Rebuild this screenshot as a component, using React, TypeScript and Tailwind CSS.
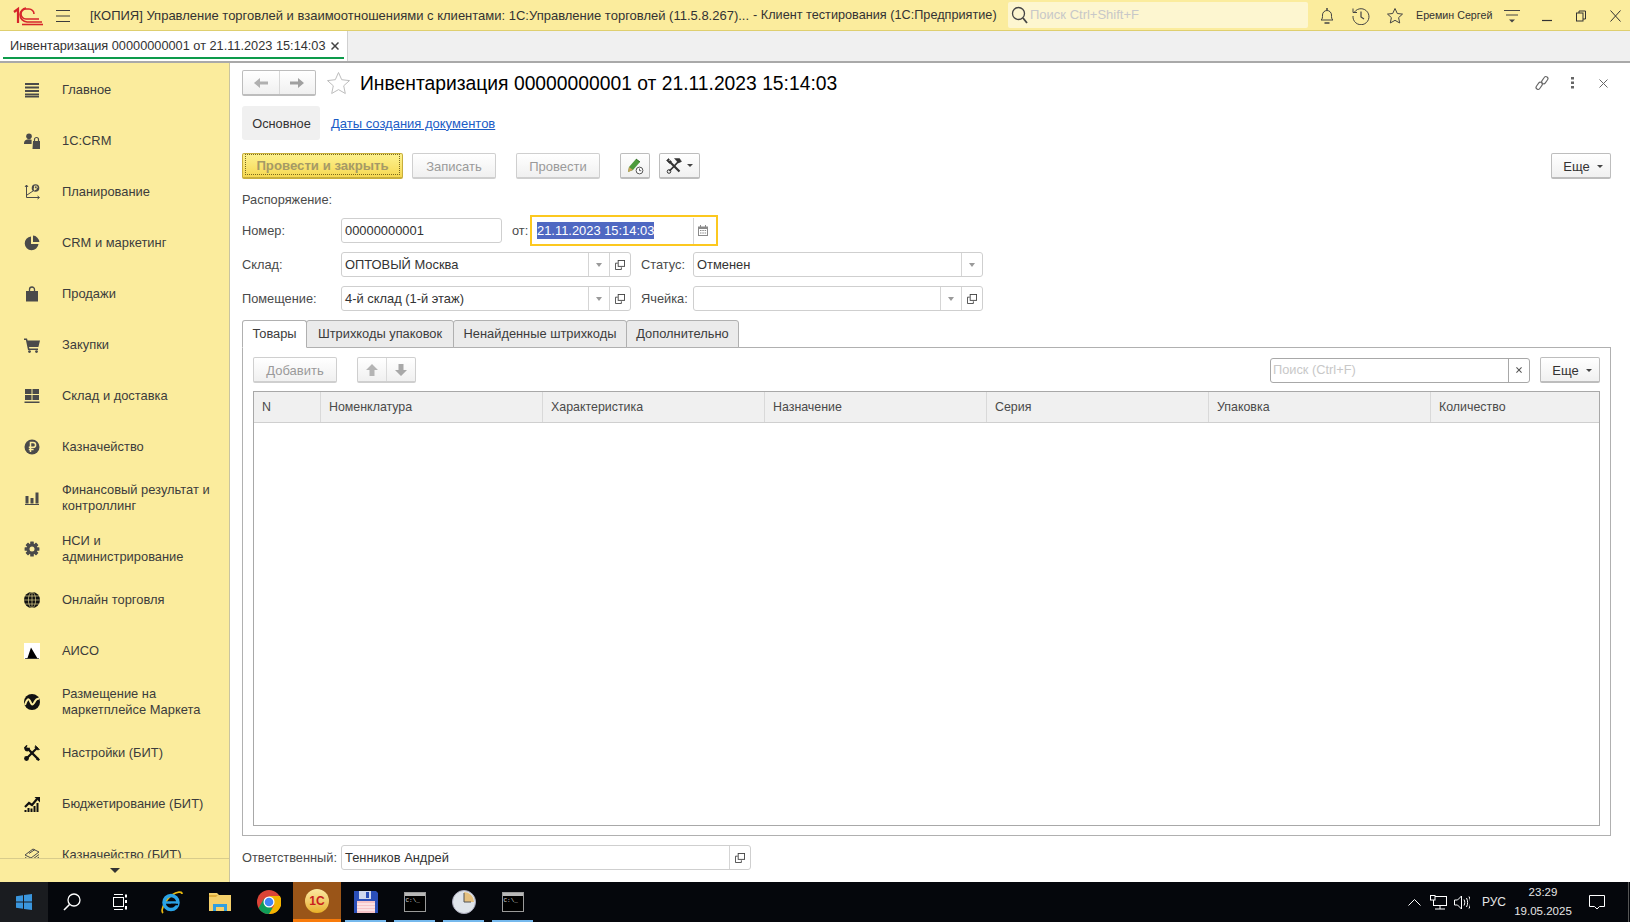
import React from "react";

const G = "#4a4a4a";

function MenuIcon({ name }: { name: string }) {
  const c = "w-4 h-4 shrink-0";
  switch (name) {
    case "main":
      return <svg className={c} viewBox="0 0 16 16" fill={G}><rect x="1" y="1" width="14" height="2" /><rect x="1" y="4.5" width="14" height="2" /><rect x="1" y="8" width="14" height="2" /><rect x="1" y="11.5" width="14" height="2" /><rect x="1" y="14" width="14" height="1.5" /></svg>;
    case "crm":
      return <svg className={c} viewBox="0 0 16 16" fill={G}><circle cx="5" cy="3.2" r="2.8" /><path d="M0 10c0-2.5 2-3.8 5-3.8 1 0 2 .2 2.6.5V11H0z" /><path d="M9 8h7v8H8.5z" /><path d="M10.5 8V6.5a2 2 0 0 1 4 0V8" fill="none" stroke={G} strokeWidth="1.2" /></svg>;
    case "plan":
      return <svg className={c} viewBox="0 0 16 16" fill="none" stroke={G} strokeWidth="1"><path d="M2.5 1v12.5H15" /><path d="M1 3l1.5-2L4 3M13.5 12l2 1.5-2 1.5" /><path d="M3 11l6-4" /><circle cx="11.5" cy="4" r="3.8" fill={G} stroke="none" /><path d="M10.5 6.5V2h1.6a1.2 1.2 0 0 1 0 2.4h-2.4M9.8 5.5h2.6" stroke="#fbec9d" strokeWidth=".9" /></svg>;
    case "pie":
      return <svg className={c} viewBox="0 0 16 16" fill={G}><path d="M7 1.5A6.9 6.9 0 1 0 14.5 9H7z" /><path d="M9 0.6A7 7 0 0 1 15.4 7H9z" /></svg>;
    case "bag":
      return <svg className={c} viewBox="0 0 16 16" fill={G}><path d="M2 5h12v10.5H2z" /><path d="M5.5 7V3.5a2.5 2.5 0 0 1 5 0V7" fill="none" stroke={G} strokeWidth="1.3" /></svg>;
    case "cart":
      return <svg className={c} viewBox="0 0 16 16" fill={G}><path d="M0 1.5h3l.6 2H16l-1.6 6.5H5l.4 1.5H14V13H4L1.9 3H0z" /><circle cx="5.5" cy="14.6" r="1.4" /><circle cx="12.5" cy="14.6" r="1.4" /></svg>;
    case "grid":
      return <svg className={c} viewBox="0 0 16 16" fill={G}><rect x="1" y="1" width="6.5" height="5" /><rect x="8.5" y="1" width="6.5" height="5" /><rect x="1" y="7" width="6.5" height="5" /><rect x="8.5" y="7" width="6.5" height="5" /><rect x="0.5" y="13.5" width="15" height="1.5" /></svg>;
    case "rub":
      return <svg className={c} viewBox="0 0 16 16"><circle cx="8" cy="8" r="7.5" fill={G} /><path d="M6.5 13V3.5h2.7a2.4 2.4 0 0 1 0 4.8H4.8M4.8 10.5h4.8" fill="none" stroke="#fbec9d" strokeWidth="1.5" /></svg>;
    case "bars":
      return <svg className={c} viewBox="0 0 16 16" fill={G}><rect x="1.5" y="6" width="3" height="7.5" /><rect x="6.5" y="8" width="3" height="5.5" /><rect x="11.5" y="2.5" width="3" height="11" /><rect x="1" y="14" width="14" height="1" /></svg>;
    case "gear":
      return <svg className={c} viewBox="0 0 16 16"><g fill={G}><circle cx="8" cy="8" r="5.4" /><g><rect x="6.2" y="0.6" width="3.6" height="14.8" rx=".5" /><rect x="6.2" y="0.6" width="3.6" height="14.8" rx=".5" transform="rotate(45 8 8)" /><rect x="6.2" y="0.6" width="3.6" height="14.8" rx=".5" transform="rotate(90 8 8)" /><rect x="6.2" y="0.6" width="3.6" height="14.8" rx=".5" transform="rotate(135 8 8)" /></g></g><circle cx="8" cy="8" r="2.5" fill="#fbec9d" /></svg>;
    case "globe":
      return <svg className={c} viewBox="0 0 16 16"><circle cx="8" cy="8" r="8" fill="#111" /><g fill="none" stroke="#fbec9d" strokeWidth=".6"><ellipse cx="8" cy="8" rx="3.6" ry="8" /><path d="M8 0v16M0 8h16M1.2 4h13.6M1.2 12h13.6" /></g></svg>;
    case "aiso":
      return <svg className={c} viewBox="0 0 16 16"><rect width="16" height="16" fill="#fff" /><path d="M7 4.500L13.500 15.500H1.500L3.500 15z" fill="#000" /><path d="M1 15.500h14" stroke="#000" strokeWidth=".6" /></svg>;
    case "market":
      return <svg className={c} viewBox="0 0 16 16"><circle cx="8" cy="8" r="8" fill="#111" /><path d="M1 11c2-6 3.5-7 5-4s2 5 4 2 2-5 5-4" fill="none" stroke="#fbec9d" strokeWidth="2" /></svg>;
    case "tools":
      return <svg className={c} viewBox="0 0 16 16" fill="none" stroke="#111"><path d="M3 3l11 11" strokeWidth="2.400" /><path d="M13.500 2.500L3 13" strokeWidth="2.200" /><path d="M11.500 .5l4 4-2 .5-2.500-2.500z" fill="#111" strokeWidth=".6" /><path d="M0 2.500l2.500-2.500 1 .5-1 2 1 1 2-1 .5 1.500-2.500 2.500-2-.5L.5 4.500z" fill="#111" stroke="none" /><circle cx="2.500" cy="13.500" r="2.400" fill="#111" stroke="none" /><path d="M12 14.500l2-2 2 2-1.500 1.500z" fill="#111" stroke="none" /></svg>;
    case "budget":
      return <svg className={c} viewBox="0 0 16 16" fill="#111"><path d="M1 11l4-4 3 2 5-6" fill="none" stroke="#111" strokeWidth="2.2" /><path d="M10.5 1H16v5.5z" /><rect x="0.5" y="14" width="2" height="2" /><rect x="3.5" y="12" width="2" height="4" /><rect x="6.5" y="12.5" width="2" height="3.5" /><rect x="9.5" y="10" width="2" height="6" /><rect x="12.5" y="7" width="2" height="9" /></svg>;
    default:
      return <svg className={c} viewBox="0 0 16 16" fill="none" stroke={G} strokeWidth="1"><path d="M1 8l8-6 6 3-8 6zM1 10.5l6 3 8-6M1 13l6 3 8-6" /><path d="M5 6.5l6-4" /></svg>;
  }
}

const menu: [string, string][] = [
  ["main", "Главное"],
  ["crm", "1С:CRM"],
  ["plan", "Планирование"],
  ["pie", "CRM и маркетинг"],
  ["bag", "Продажи"],
  ["cart", "Закупки"],
  ["grid", "Склад и доставка"],
  ["rub", "Казначейство"],
  ["bars", "Финансовый результат и контроллинг"],
  ["gear", "НСИ и администрирование"],
  ["globe", "Онлайн торговля"],
  ["aiso", "АИСО"],
  ["market", "Размещение на маркетплейсе Маркета"],
  ["tools", "Настройки (БИТ)"],
  ["budget", "Бюджетирование (БИТ)"],
  ["money", "Казначейство (БИТ)"],
];

function TitleBar() {
  return (
    <div className="h-[31px] shrink-0 flex items-center pt-[1px] bg-[#fbec9d] border-b border-[#dfcf6f] text-[#333] text-[13px]">
      <svg className="ml-[13px] w-[30px] h-[20px] shrink-0" viewBox="0 0 30 20" fill="none" stroke="#d6252b">
        <path d="M1 6l4-3v14" strokeWidth="2.2" />
        <path d="M28 13h-13a5 5 0 0 1 0-10h3a5 5 0 0 1 5 5" strokeWidth="1.6" transform="translate(-2 0)" />
        <path d="M29 16H14a7.5 7.5 0 0 1-7-7.5 7 7 0 0 1 6-6.5" strokeWidth="1.6" />
        <path d="M30 18.5H9" strokeWidth="1.6" />
      </svg>
      <svg className="ml-[13px] w-[14px] h-[12px] shrink-0" viewBox="0 0 14 12" stroke="#3c3c3c" strokeWidth="1"><path d="M0 .5h14M0 6h14M0 11.5h14" /></svg>
      <span className="ml-[20px] w-[652px] whitespace-nowrap">[КОПИЯ] Управление торговлей и взаимоотношениями с клиентами: 1С:Управление торговлей (11.5.8.267)...</span>
      <span className="ml-[11px] w-[243px] whitespace-nowrap text-[12.7px]">- Клиент тестирования (1С:Предприятие)</span>
      <div className="ml-[12px] -mt-[1px] w-[300px] h-[26px] bg-[#fdf6d0] rounded-[2px] flex items-center pl-[3px] gap-[2px] text-[#c8c8c8]">
        <svg className="w-[17px] h-[18px]" viewBox="0 0 17 18" fill="none" stroke="#444" strokeWidth="1.3"><circle cx="7.5" cy="7.5" r="6" /><path d="M12 12l4 5" strokeWidth="1.8" /></svg>
        <span>Поиск Ctrl+Shift+F</span>
      </div>
      <svg className="ml-[11px] w-[16px] h-[18px]" viewBox="0 0 16 18" fill="none" stroke="#444"><path d="M2 13c1.5-1 1.5-2.5 1.5-5a4.5 4.5 0 0 1 9 0c0 2.5 0 4 1.500 5z" /><path d="M8 1v2M5.500 16h5" strokeWidth="1.500" /></svg>
      <svg className="ml-[17px] w-[18px] h-[18px]" viewBox="0 0 18 18" fill="none" stroke="#444"><path d="M2.500 5A8 8 0 1 1 1 9" /><path d="M1 1.500v4h4" /><path d="M9 4.500V10l3 2" strokeWidth="1.200" /></svg>
      <svg className="ml-[16px] w-[18px] h-[18px]" viewBox="0 0 18 18" fill="none" stroke="#444"><path d="M9 1.500l2.300 5 5.200.6-3.900 3.500 1.100 5.400L9 13.300 4.300 16l1.100-5.400L1.500 7.100l5.200-.6z" /></svg>
      <span className="ml-[12px] w-[88px] text-[10.7px] whitespace-nowrap">Еремин Сергей</span>
      <svg className="w-[16px] h-[14px]" viewBox="0 0 16 14" stroke="#444" fill="#444"><path d="M0 1.500h16M2 6h12" fill="none" /><path d="M5 10.500h6L8 13.500z" stroke="none" /></svg>
      <svg className="ml-[22px] w-[10px] h-[12px]" viewBox="0 0 10 12" stroke="#333"><path d="M0 10.500h10" strokeWidth="1.200" /></svg>
      <svg className="ml-[24px] w-[10px] h-[12px]" viewBox="0 0 10 12" fill="none" stroke="#333"><rect x=".5" y="3" width="6.500" height="8" /><path d="M3 3V1h6.500v8H7" /></svg>
      <svg className="ml-[24px] w-[11px] h-[12px]" viewBox="0 0 11 12" stroke="#333"><path d="M.5 .5l10 11M10.500 .5l-10 11" /></svg>
    </div>
  );
}

function TabBar() {
  return (
    <div className="h-[32px] shrink-0 flex bg-[#f0f0f0] border-b-2 border-[#a9a9a9]">
      <div className="w-[348px] bg-white border-r border-[#d0d0d0] px-[3px] flex flex-col">
        <div className="flex-1 flex items-center pt-[4px] pl-[7px] pr-[5px] justify-between text-[12.75px] text-[#333] whitespace-nowrap">
          <span>Инвентаризация 00000000001 от 21.11.2023 15:14:03</span>
          <svg className="w-[8px] h-[8px]" viewBox="0 0 8 8" stroke="#444" strokeWidth="1.500"><path d="M.5 .5l7 7M7.500 .5l-7 7" /></svg>
        </div>
        <div className="h-[2px] mb-[2px] bg-[#0d9b4b]" />
      </div>
    </div>
  );
}

function Sidebar() {
  return (
    <div className="w-[230px] shrink-0 flex flex-col bg-[#fbec9d] border-r border-[#c9c4a0]">
      <div className="flex-1 overflow-hidden pt-[1px]">
        {menu.map(([icon, label]) => (
          <div key={label} className="h-[51px] flex items-center pl-[24px] gap-[22px] text-[#3c3c3c] text-[12.9px] leading-[16px]">
            <MenuIcon name={icon} />
            <span className="w-[155px]">{label}</span>
          </div>
        ))}
      </div>
      <div className="h-[24px] shrink-0 border-t border-[#d8cc8c] flex items-center justify-center">
        <div className="w-0 h-0 border-x-[5px] border-x-transparent border-t-[5px] border-t-[#333]" />
      </div>
    </div>
  );
}

const btn = "h-[26px] flex items-center justify-center rounded-[2px] border border-[#cfcfcf] border-b-[2px] bg-gradient-to-b from-white to-[#f0f0f0] text-[13px] pt-[2px]";

function Caret() {
  return <div className="w-0 h-0 border-x-[3px] border-x-transparent border-t-[3px] border-t-[#444]" />;
}

function OpenIcon() {
  return <svg className="w-[10px] h-[10px]" viewBox="0 0 11 11" fill="none" stroke="#444"><rect x="3.500" y=".5" width="7" height="6.500" /><path d="M3 3.500H.5v7H7V8" /></svg>;
}

function Ddl({ color = "#9a9a9a" }: { color?: string }) {
  return <div className="w-0 h-0 border-x-[3.500px] border-x-transparent border-t-[4px]" style={{ borderTopColor: color }} />;
}

function Field({ width, value, drop, open }: { width: string; value: string; drop?: boolean; open?: boolean }) {
  return (
    <div className={`${width} h-[25px] flex items-stretch rounded-[3px] border border-[#cfcfcf] bg-white text-[#333] text-[12.9px]`}>
      <div className="flex-1 pl-[3px] flex items-center whitespace-nowrap overflow-hidden">{value}</div>
      {drop && <div className="w-[21px] border-l border-[#d5d5d5] flex items-center justify-center"><Ddl /></div>}
      {open && <div className="w-[21px] border-l border-[#d5d5d5] flex items-center justify-center"><OpenIcon /></div>}
    </div>
  );
}

function Tab({ w, label, active }: { w: string; label: string; active?: boolean }) {
  return (
    <div className={`${w} h-[28px] flex items-center justify-center rounded-t-[3px] border border-[#b0b0b0] text-[12.85px] text-[#3c3c3c] -mr-px ${active ? "bg-white border-b-white z-10" : "bg-[#ebebeb]"}`}>
      {label}
    </div>
  );
}

const cols: [string, string][] = [
  ["w-[67px]", "N"],
  ["w-[222px]", "Номенклатура"],
  ["w-[222px]", "Характеристика"],
  ["w-[222px]", "Назначение"],
  ["w-[222px]", "Серия"],
  ["w-[222px]", "Упаковка"],
  ["flex-1", "Количество"],
];

function FormArea() {
  return (
    <div className="flex-1 min-w-0 bg-white pl-[12px] pr-[19px] text-[12.8px] text-[#4a4a4a]">
      <div className="mt-[8px] h-[24px] flex items-center">
        <div className={`${btn} w-[74px] h-[25px] !pt-0 !border-[#bdbdbd]`}>
          <div className="flex-1 flex justify-center border-r border-[#d8d8d8] h-full items-center">
            <svg className="w-[14px] h-[12px]" viewBox="0 0 14 12" fill="#b0b0b0"><path d="M0 6l6-5v3.500h8v3H6V11z" /></svg>
          </div>
          <div className="flex-1 flex justify-center items-center">
            <svg className="w-[14px] h-[12px]" viewBox="0 0 14 12" fill="#a0a0a0"><path d="M14 6L8 1v3.500H0v3h8V11z" /></svg>
          </div>
        </div>
        <svg className="ml-[10px] w-[25px] h-[24px]" viewBox="0 0 25 24" fill="none" stroke="#bdbdbd"><path d="M12.500 1.500l3.200 7.200 7.800.9-5.800 5.200 1.600 7.700-6.800-3.900-6.800 3.900 1.600-7.700L1.500 9.600l7.800-.9z" /></svg>
        <h1 className="ml-[9px] pt-[2px] text-[19.3px] font-normal text-black whitespace-nowrap">Инвентаризация 00000000001 от 21.11.2023 15:14:03</h1>
        <div className="ml-auto flex items-center">
          <svg className="w-[18px] h-[18px]" viewBox="0 0 16 16" fill="none" stroke="#666"><rect x="-3.500" y="-1.800" width="7" height="3.600" rx="1.800" transform="translate(5.500 10.500) rotate(-55)" /><rect x="-3.500" y="-1.800" width="7" height="3.600" rx="1.800" transform="translate(10.500 5.500) rotate(-55)" /></svg>
          <svg className="ml-[20px] w-[3px] h-[12px]" viewBox="0 0 3 12" fill="#666"><rect width="3" height="2.500" /><rect y="4.500" width="3" height="2.500" /><rect y="9" width="3" height="2.500" /></svg>
          <svg className="ml-[25px] w-[9px] h-[9px] mr-[3px]" viewBox="0 0 9 9" stroke="#666"><path d="M.5 .5l8 8M8.500 .5l-8 8" /></svg>
        </div>
      </div>

      <div className="mt-[11px] h-[34px] flex items-center">
        <div className="w-[78px] h-full bg-[#f0f0f0] rounded-[3px] flex items-center justify-center text-[#333] pt-[1px] pl-[1px]">Основное</div>
        <a className="ml-[11px] text-[#1b5cc6] underline pt-[1px] text-[13px]">Даты создания документов</a>
      </div>

      <div className="mt-[13px] flex items-center">
        <div className={`${btn} w-[161px] !pt-0 !border-[#c8ae3c] !from-[#fdf28f] !to-[#f6d84f] p-[2px]`}>
          <div className="w-full h-full border border-dotted border-[#7a6a20] flex items-center justify-center pt-[2px] font-bold text-[13.2px] text-[#a59a66]">Провести и закрыть</div>
        </div>
        <div className={`${btn} ml-[9px] w-[84px] text-[#9a9a9a]`}>Записать</div>
        <div className={`${btn} ml-[20px] w-[84px] text-[#9a9a9a]`}>Провести</div>
        <div className={`${btn} ml-[20px] w-[30px] !pt-0 !border-[#bdbdbd]`}>
          <svg className="w-[18px] h-[18px]" viewBox="0 0 18 18"><path d="M2 15l1-5 7-8 4 3-7 8z" fill="#4d9b3d" /><path d="M2 15l1-5 4 3z" fill="#c9a25a" /><path d="M10 2l4 3" stroke="#2f6d25" /><circle cx="13.500" cy="13.500" r="3.400" fill="#fff" stroke="#555" /><path d="M13.500 11.500v2.200h1.800" fill="none" stroke="#555" strokeWidth=".9" /></svg>
        </div>
        <div className={`${btn} ml-[9px] w-[41px] gap-[5px] !pt-0 !border-[#bdbdbd]`}>
          <svg className="w-[16px] h-[16px]" viewBox="0 0 16 16" fill="none" stroke="#333"><path d="M3 3l10.500 10.500" strokeWidth="2.200" /><path d="M13 3L3.500 13" strokeWidth="1.800" /><path d="M8.500 .5h5l2 3-3 1.500z" fill="#333" strokeWidth=".5" /><path d="M.5 2.500L2.500 .5l1 1-1 1 1 1 1-1 1 1-2 2z" fill="#333" strokeWidth=".5" /><circle cx="3" cy="13.500" r="1.800" stroke="#333" /></svg>
          <Caret />
        </div>
        <div className={`${btn} ml-auto w-[60px] gap-[7px] pl-[4px] text-[#333] !border-[#bdbdbd] text-[13.33px]`}>Еще <Caret /></div>
      </div>

      <div className="mt-[13px] h-[16px] leading-[16px]">Распоряжение:</div>

      <div className="mt-[7px] h-[31px] flex items-center">
        <span className="w-[99px]">Номер:</span>
        <Field width="w-[161px]" value="00000000001" />
        <span className="ml-[10px] w-[18px]">от:</span>
        <div className="w-[188px] h-[31px] border-2 border-[#fcc81f] flex items-center pl-[5px] pr-0 text-[12.9px]">
          <span className="bg-[#4f68c2] text-white leading-[17px] whitespace-nowrap">21.11.2023 15:14:03</span>
          <div className="ml-auto w-[23px] h-[26px] border-l border-[#d5d5d5] flex items-center justify-center pr-[4px]">
            <svg className="w-[10px] h-[11px]" viewBox="0 0 10 11" fill="#8a8a8a"><path d="M0 1.500h10V11H0zM1 4v6h8V4z" /><path d="M2 0h1v2H2zM7 0h1v2H7zM2 5h1.500v1H2zM4.300 5h1.500v1H4.300zM6.600 5h1.500v1H6.600zM2 7.500h1.500v1H2zM4.300 7.500h1.500v1H4.300zM6.600 7.500h1.500v1H6.600z" /></svg>
          </div>
        </div>
      </div>

      <div className="mt-[6px] h-[25px] flex items-center">
        <span className="w-[99px]">Склад:</span>
        <Field width="w-[290px]" value="ОПТОВЫЙ Москва" drop open />
        <span className="ml-[10px] w-[52px]">Статус:</span>
        <Field width="w-[290px]" value="Отменен" drop />
      </div>

      <div className="mt-[9px] h-[25px] flex items-center">
        <span className="w-[99px]">Помещение:</span>
        <Field width="w-[290px]" value="4-й склад (1-й этаж)" drop open />
        <span className="ml-[10px] w-[52px]">Ячейка:</span>
        <Field width="w-[290px]" value="" drop open />
      </div>

      <div className="mt-[9px] flex relative z-10 -mb-px">
        <Tab w="w-[65px]" label="Товары" active />
        <Tab w="w-[148px]" label="Штрихкоды упаковок" />
        <Tab w="w-[174px]" label="Ненайденные штрихкоды" />
        <Tab w="w-[113px]" label="Дополнительно" />
      </div>

      <div className="h-[489px] border border-[#b0b0b0] px-[10px] pt-[9px] pb-[9px] flex flex-col">
        <div className="h-[26px] flex items-center">
          <div className={`${btn} w-[84px] text-[#9a9a9a]`}>Добавить</div>
          <div className={`${btn} ml-[20px] w-[59px] !pt-0`}>
            <div className="flex-1 h-full flex items-center justify-center border-r border-[#dadada]">
              <svg className="w-[12px] h-[12px]" viewBox="0 0 12 12" fill="#b4b4b4"><path d="M6 0l6 6H8.500v6h-5V6H0z" /></svg>
            </div>
            <div className="flex-1 h-full flex items-center justify-center">
              <svg className="w-[12px] h-[12px]" viewBox="0 0 12 12" fill="#a8a8a8"><path d="M6 12L0 6h3.500V0h5v6H12z" /></svg>
            </div>
          </div>
          <div className="ml-auto w-[260px] h-[25px] flex rounded-[3px] border border-[#a8a8a8] bg-white">
            <div className="flex-1 pl-[2px] flex items-center text-[#c8c8c8]">Поиск (Ctrl+F)</div>
            <div className="w-[21px] border-l border-[#a8a8a8] flex items-center justify-center">
              <svg className="w-[6px] h-[6px]" viewBox="0 0 7 7" stroke="#555" strokeWidth="1.200"><path d="M.5 .5l6 6M6.500 .5l-6 6" /></svg>
            </div>
          </div>
          <div className={`${btn} ml-[10px] w-[60px] gap-[7px] pl-[4px] text-[#333] !border-[#bdbdbd] text-[13.33px]`}>Еще <Caret /></div>
        </div>
        <div className="mt-[8px] flex-1 border border-[#a8a8a8] bg-white text-[12.4px]">
          <div className="h-[31px] flex bg-[#f0f0f0] border-b border-[#cfcfcf]">
            {cols.map(([w, label], i) => (
              <div key={label} className={`${w} pl-[8px] flex items-center ${i < 6 ? "border-r border-[#d9d9d9]" : ""}`}>{label}</div>
            ))}
          </div>
        </div>
      </div>

      <div className="mt-[9px] h-[25px] flex items-center">
        <span className="w-[99px] whitespace-nowrap">Ответственный:</span>
        <Field width="w-[410px]" value="Тенников Андрей" open />
      </div>
    </div>
  );
}

function Cmd() {
  return (
    <div className="w-[22px] h-[20px] bg-black border border-[#9a9a9a] flex flex-col">
      <div className="h-[3px] bg-[#b8b8b8]" />
      <div className="text-[6px] leading-[9px] text-[#ddd] font-['Liberation_Mono',monospace] pl-[1px]">C:\_</div>
    </div>
  );
}

function TaskIcon({ children, active, bar, w = "w-[49px]" }: { children: React.ReactNode; active?: boolean; bar?: boolean; w?: string }) {
  return (
    <div className={`${w} h-10 shrink-0 relative flex items-center justify-center ${active ? "bg-[#9a5518] border-b-[3px] border-[#f97b0a]" : ""}`}>
      {children}
      {bar && <div className="absolute bottom-0 left-[4px] right-[4px] h-[2px] bg-[#76b9ed]" />}
    </div>
  );
}

function Taskbar() {
  return (
    <div className="h-10 shrink-0 flex bg-[#05070c] text-[#e6e6e6] text-[12px]">
      <div className="w-[48px] h-10 bg-[#1a1c20] flex items-center justify-center">
        <svg className="w-[16px] h-[16px]" viewBox="0 0 16 16" fill="#3a96dd"><path d="M0 2.300l7-1V7.500H0zM8 1.100L16 0v7.500H8zM0 8.500h7v6.200l-7-1zM8 8.500h8V16l-8-1.100z" /></svg>
      </div>
      <TaskIcon w="w-[48px]"><svg className="w-[18px] h-[18px]" viewBox="0 0 18 18" fill="none" stroke="#fff" strokeWidth="1.300"><circle cx="11" cy="7" r="6" /><path d="M6.500 11.500L1 17" strokeWidth="1.600" /></svg></TaskIcon>
      <TaskIcon w="w-[50px]"><svg className="w-[16px] h-[16px]" viewBox="0 0 16 16" fill="none" stroke="#fff"><path d="M1 .5h9M1 15.500h9" /><rect x=".5" y="3.500" width="10" height="9" /><path d="M13 .5v3M13 6v3M13 12v3.500" strokeWidth="2" /></svg></TaskIcon>
      <TaskIcon>
        <svg className="w-[24px] h-[24px]" viewBox="0 0 24 24" fill="none"><path d="M4 23c-3-3 3-14 9-18 5-3.500 10-4 10-1" stroke="#e8b80f" strokeWidth="1.800" /><circle cx="12" cy="12.500" r="7" stroke="#2aa3e6" strokeWidth="3.500" /><path d="M6 12.500h12" stroke="#2aa3e6" strokeWidth="2.500" /><path d="M19 14.500h-7" stroke="#05070c" strokeWidth="1.500" /></svg>
      </TaskIcon>
      <TaskIcon>
        <svg className="w-[22px] h-[20px]" viewBox="0 0 22 20"><path d="M0 1h8l2 2h12v16H0z" fill="#f4cf6a" /><path d="M0 3h9l-2 2H0z" fill="#e0ad3a" /><path d="M4 19v-7h14v7h-3v-4H7v4z" fill="#2f9fe0" /></svg>
      </TaskIcon>
      <TaskIcon>
        <svg className="w-[24px] h-[24px]" viewBox="0 0 24 24"><circle cx="12" cy="12" r="12" fill="#db4437" /><path d="M12 24a12 12 0 0 1-10.400-6L7 8.500 12 17l4.500 1.200L12 24z" fill="#0f9d58" /><path d="M12 6h10.900A12 12 0 0 1 12 24l5-8.500L12 6z" fill="#f4b400" /><circle cx="12" cy="12" r="5.500" fill="#fff" /><circle cx="12" cy="12" r="4.300" fill="#4285f4" /></svg>
      </TaskIcon>
      <TaskIcon active w="w-[48px]">
        <div className="w-[24px] h-[24px] rounded-full bg-gradient-to-b from-[#fbe9a0] to-[#e8b020] flex items-center justify-center text-[#c81e1e] text-[12px] font-bold leading-none">1С</div>
      </TaskIcon>
      <TaskIcon bar>
        <svg className="w-[24px] h-[24px]" viewBox="0 0 24 24"><path d="M0 1h22l2 2v20H0z" fill="#2a4fb8" /><rect x="5" y="1" width="12" height="8" fill="#cfd8ee" /><rect x="12" y="2" width="3" height="6" fill="#2a4fb8" /><rect x="3" y="11" width="18" height="12" fill="#f6c4c8" /><path d="M3 14h18M3 17h18M3 20h18" stroke="#fff" /></svg>
      </TaskIcon>
      <TaskIcon bar><Cmd /></TaskIcon>
      <TaskIcon bar>
        <svg className="w-[24px] h-[24px]" viewBox="0 0 24 24"><circle cx="12" cy="12" r="11.500" fill="#dfe4ea" stroke="#aab" /><path d="M12 12V2a10 10 0 0 1 10 10z" fill="#e6c07e" /><path d="M12 3v9h7" fill="none" stroke="#555" strokeWidth="1" /></svg>
      </TaskIcon>
      <TaskIcon bar><Cmd /></TaskIcon>
      <div className="ml-auto flex items-center">
        <svg className="w-[13px] h-[8px]" viewBox="0 0 13 8" fill="none" stroke="#fff"><path d="M.5 7.500l6-6 6 6" /></svg>
        <svg className="ml-[9px] w-[17px] h-[15px]" viewBox="0 0 17 15" fill="none" stroke="#fff"><rect x="3.500" y="1.500" width="13" height="9" /><path d="M10 10.500V14M5 14h10" /><rect x=".5" y=".5" width="4.500" height="4.500" fill="#05070c" /></svg>
        <svg className="ml-[7px] w-[16px] h-[15px]" viewBox="0 0 16 15" fill="none" stroke="#fff"><path d="M.5 5h3l4-4v13l-4-4h-3z" /><path d="M10 4.500c1 2 1 4 0 6M12.500 3c1.500 3 1.500 6 0 9M15 1.500c2 4 2 8 0 12" /></svg>
        <span className="ml-[12px] w-[24px] text-[12px]">РУС</span>
        <div className="w-[74px] flex flex-col items-center leading-[19px] text-[11.5px]"><span>23:29</span><span>19.05.2025</span></div>
        <svg className="ml-[9px] w-[16px] h-[16px]" viewBox="0 0 16 16" fill="none" stroke="#fff"><path d="M.5 1.500h15v11h-5L8 15l-2.500-2.500h-5z" /></svg>
        <div className="ml-[23px] mr-[1px] w-px h-full bg-[#555]" />
      </div>
    </div>
  );
}

export default function App() {
  return (
    <div className="w-[1630px] h-[922px] overflow-hidden flex flex-col font-['Liberation_Sans',Arial,sans-serif]">
      <TitleBar />
      <TabBar />
      <div className="flex-1 min-h-0 flex">
        <Sidebar />
        <FormArea />
      </div>
      <Taskbar />
    </div>
  );
}
